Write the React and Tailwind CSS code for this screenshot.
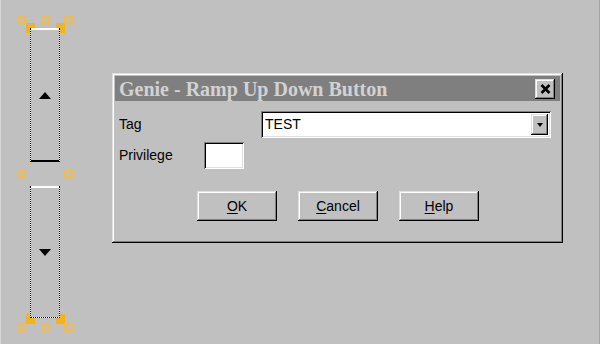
import React from 'react';

const raised =
  'shadow-[inset_-1px_-1px_0_#000,inset_1px_1px_0_#dfdfdf,inset_-2px_-2px_0_#808080,inset_2px_2px_0_#fff]';
const sunken =
  'shadow-[inset_1px_1px_0_#808080,inset_-1px_-1px_0_#fff,inset_2px_2px_0_#000,inset_-2px_-2px_0_#dfdfdf]';

function Handle({ pos, filled }) {
  return (
    <div
      className={`absolute ${pos} ${
        filled ? 'w-[9px] h-[10px] bg-[#f3b21f]' : 'w-[9px] h-[9px] border-2 border-[#f4bb45]'
      }`}
    />
  );
}

function DlgButton({ hot, rest }) {
  return (
    <button className={`w-[80px] h-[30px] bg-[#c0c0c0] ${raised} flex items-center justify-center text-[14px] text-black`}>
      <span>
        <span className="underline underline-offset-2">{hot}</span>
        {rest}
      </span>
    </button>
  );
}

export default function App() {
  return (
    <div
      className="w-[600px] h-[344px] bg-[#c0c0c0] border-l border-l-[#d6d6d6] border-r border-r-[#a4a4a4] flex items-start overflow-hidden"
      style={{ fontFamily: '"Liberation Sans", Arial, sans-serif' }}
    >
      {/* ramp up / down widget being edited */}
      <div className="relative ml-[29px] mt-[28px] w-[30px] flex flex-col">
        <Handle pos="left-[-4px] top-[-5px]" filled />
        <Handle pos="left-[26px] top-[-5px]" filled />
        <Handle pos="left-[-4px] top-[286px]" filled />
        <Handle pos="left-[26px] top-[286px]" filled />

        <div className="relative z-10 h-[134px] bg-white border-x border-dotted border-black flex flex-col">
          <div className="h-[2px] bg-white" />
          <div className="flex-1 bg-[#c0c0c0] flex items-center justify-center">
            <div className="w-0 h-0 border-x-[6px] border-x-transparent border-b-[7px] border-b-black" />
          </div>
          <div className="h-[2px] bg-black" />
        </div>
        <div className="h-[24px] border-x border-dotted border-[#f4bb45]" />
        <div className="relative z-10 h-[132px] bg-white border-x border-b border-dotted border-black flex flex-col">
          <div className="h-[2px] bg-white" />
          <div className="flex-1 bg-[#c0c0c0] flex items-center justify-center">
            <div className="w-0 h-0 border-x-[6px] border-x-transparent border-t-[7px] border-t-black" />
          </div>
        </div>

        <Handle pos="left-[-13px] top-[-13px]" />
        <Handle pos="left-[11px] top-[-13px]" />
        <Handle pos="left-[34px] top-[-13px]" />
        <Handle pos="left-[-13px] top-[141px]" />
        <Handle pos="left-[34px] top-[141px]" />
        <Handle pos="left-[-13px] top-[295px]" />
        <Handle pos="left-[11px] top-[295px]" />
        <Handle pos="left-[34px] top-[295px]" />
      </div>

      {/* Genie dialog */}
      <div className={`ml-[52px] mt-[73px] w-[451px] h-[170px] bg-[#c0c0c0] p-[3px] ${raised} flex flex-col`}>
        <div className="h-[25px] bg-[#7f7f7f] flex items-center justify-between pl-[4px] pr-[5px]">
          <span
            className="pt-[2px] text-[20px] leading-[23px] font-bold text-[#d2d2d2]"
            style={{ fontFamily: '"Liberation Serif", "Times New Roman", serif' }}
          >
            Genie - Ramp Up Down Button
          </span>
          <button className={`w-[20px] h-[20px] bg-[#c0c0c0] ${raised} flex items-center justify-center`}>
            <svg width="11" height="10" viewBox="0 0 11 10">
              <path d="M1.5 1 L9.5 9 M9.5 1 L1.5 9" stroke="#000" strokeWidth="2.6" />
            </svg>
          </button>
        </div>

        <div className="px-[4px] flex flex-col text-[14px] text-black">
          <div className="mt-[10px] h-[27px] flex items-center">
            <span className="w-[142px]">Tag</span>
            <div className={`w-[290px] h-[27px] bg-white ${sunken} flex items-center justify-between pl-[4px] pr-[3px]`}>
              <span className="text-[14px]">TEST</span>
              <div className={`w-[17px] h-[21px] bg-[#c0c0c0] ${raised} flex items-center justify-center`}>
                <div className="w-0 h-0 border-x-[3px] border-x-transparent border-t-[4px] border-t-black" />
              </div>
            </div>
          </div>

          <div className="mt-[4px] h-[27px] flex items-center">
            <span className="w-[85px]">Privilege</span>
            <div className={`w-[40px] h-[27px] bg-white ${sunken}`} />
          </div>

          <div className="mt-[22px] pl-[78px] flex gap-[21px]">
            <DlgButton hot="O" rest="K" />
            <DlgButton hot="C" rest="ancel" />
            <DlgButton hot="H" rest="elp" />
          </div>
        </div>
      </div>
    </div>
  );
}
